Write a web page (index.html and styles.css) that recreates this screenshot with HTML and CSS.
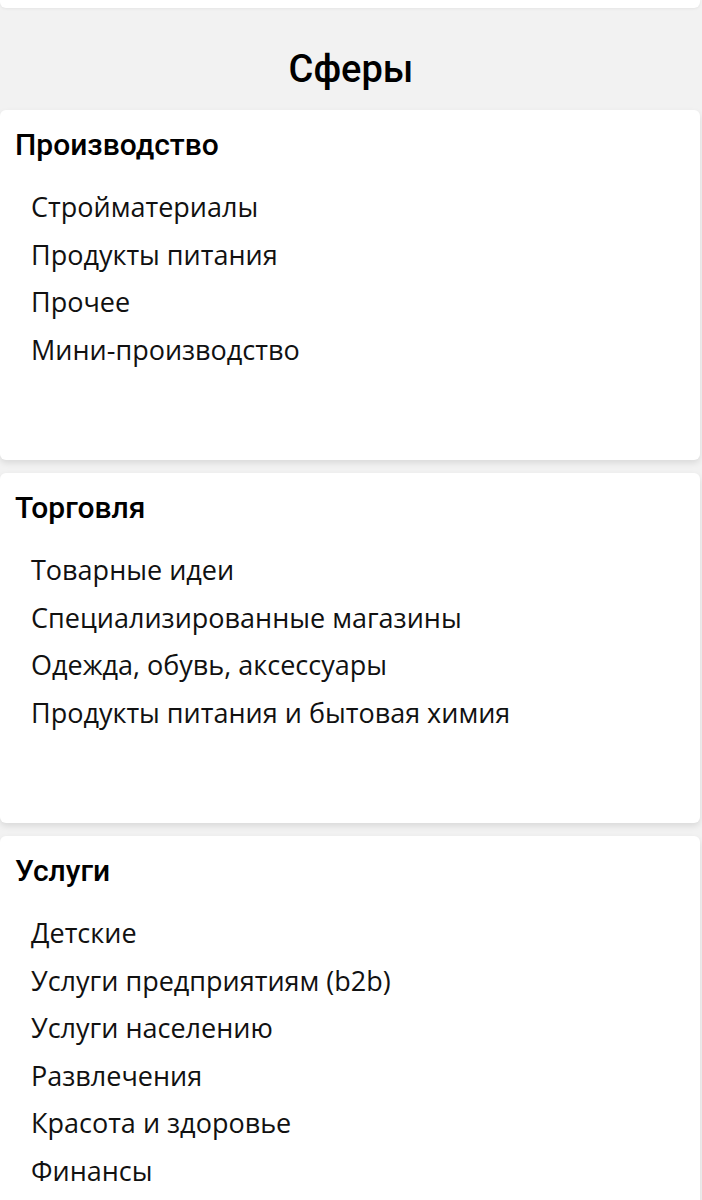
FILE: index.html
```html
<!DOCTYPE html>
<html lang="ru">
<head>
  <meta charset="UTF-8" />
  <meta name="viewport" content="width=device-width, initial-scale=1.0" />
  <title>Сферы</title>
  <link rel="stylesheet" href="styles.css">
</head>
<body>
  <div class="prev-card"></div>

  <header class="page-head">
    <h1>Сферы</h1>
  </header>

  <section class="card">
    <h2>Производство</h2>
    <ul class="list">
      <li>Стройматериалы</li>
      <li>Продукты питания</li>
      <li>Прочее</li>
      <li>Мини-производство</li>
    </ul>
  </section>

  <section class="card">
    <h2>Торговля</h2>
    <ul class="list">
      <li>Товарные идеи</li>
      <li>Специализированные магазины</li>
      <li>Одежда, обувь, аксессуары</li>
      <li>Продукты питания и бытовая химия</li>
    </ul>
  </section>

  <section class="card">
    <h2>Услуги</h2>
    <ul class="list">
      <li>Детские</li>
      <li>Услуги предприятиям (b2b)</li>
      <li>Услуги населению</li>
      <li>Развлечения</li>
      <li>Красота и здоровье</li>
      <li>Финансы</li>
    </ul>
  </section>
</body>
</html>
```

FILE: styles.css
```css
body {
  margin: 0;
  background: #f2f2f2;
  color: #111;
  font-family: Roboto, "Liberation Sans", sans-serif;
}

.prev-card {
  height: 8px;
  margin-right: 2px;
  background: #fff;
  border-radius: 0 0 6px 6px;
  box-shadow: 0 1px 3px rgba(0,0,0,0.06);
}

.page-head {
  height: 102px;
  box-sizing: border-box;
  padding-top: 39px;
  text-align: center;
}

.page-head h1 {
  margin: 0;
  font-size: 38px;
  line-height: 44px;
  font-weight: 500;
  color: #000;
}

.card {
  background: #fff;
  border-radius: 6px;
  margin: 0 2px 13px 0;
  padding: 17px 15px 87px;
  box-shadow: 0 3px 6px rgba(0,0,0,0.1);
}

.card h2 {
  margin: 0;
  font-size: 30px;
  line-height: 36px;
  font-weight: 500;
  color: #000;
}

.list {
  list-style: none;
  margin: 20px 0 0;
  padding: 0 0 0 16px;
  font-family: "Open Sans", sans-serif;
  font-size: 27px;
  line-height: 47.5px;
  color: #111;
}
```
